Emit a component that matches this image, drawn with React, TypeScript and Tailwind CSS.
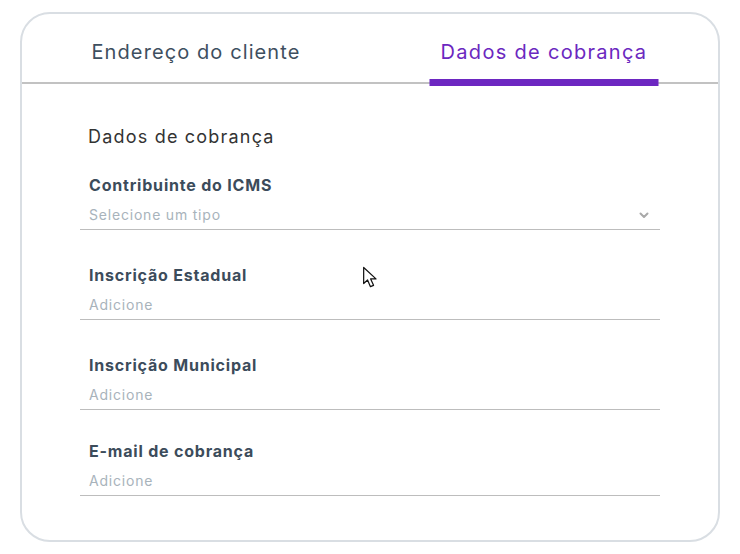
const fields = [
  { label: "Contribuinte do ICMS", placeholder: "Selecione um tipo", select: true, gap: "mt-[23px]" },
  { label: "Inscrição Estadual", placeholder: "Adicione", select: false, gap: "mt-[33px]" },
  { label: "Inscrição Municipal", placeholder: "Adicione", select: false, gap: "mt-[33px]" },
  { label: "E-mail de cobrança", placeholder: "Adicione", select: false, gap: "mt-[29px]" },
];

function Chevron() {
  return (
    <svg width="10" height="7" viewBox="0 0 10 7" fill="none">
      <path d="M1.5 1.5 L5 5 L8.5 1.5" stroke="#a9a9a9" strokeWidth="2" strokeLinecap="round" strokeLinejoin="round" />
    </svg>
  );
}

function Cursor() {
  return (
    <svg width="20" height="26" viewBox="0 0 18 22" className="absolute left-[362px] top-[265px]">
      <path
        d="M1.5 1.5 L1.5 16 L5 12.8 L7.6 18.8 L10.4 17.6 L7.8 11.8 L12.6 11.8 Z"
        fill="#ffffff"
        stroke="#111111"
        strokeWidth="1.1"
        strokeLinejoin="round"
      />
    </svg>
  );
}

export default function App() {
  return (
    <div
      className="relative h-[554px] w-[740px] bg-white pl-[20px] pt-[12px]"
      style={{ fontFamily: "Inter, 'Noto Sans', sans-serif" }}
    >
      <div className="h-[530px] w-[700px] rounded-[30px] border-2 border-[#d9dee3] bg-white">
        {/* Tabs */}
        <div className="relative flex border-b-2 border-[#c2c2c2]">
          <div className="flex flex-1 justify-center pt-[24px] pb-[16px]">
            <span className="text-[20px] leading-[28px] tracking-[1.1px] text-[#3e4f60]">
              Endereço do cliente
            </span>
          </div>
          <div className="relative flex flex-1 justify-center pt-[24px] pb-[16px]">
            <span className="text-[20px] leading-[28px] tracking-[1.3px] text-[#6b28c0]">
              Dados de cobrança
            </span>
            <div className="absolute bottom-[-4px] left-1/2 h-[7px] w-[229px] -translate-x-1/2 bg-[#6d27c1]" />
          </div>
        </div>

        {/* Content */}
        <div className="px-[58px] pt-[39px]">
          <h2 className="pl-[8px] text-[18px] leading-[27px] tracking-[1.2px] text-[#333333]">
            Dados de cobrança
          </h2>
          {fields.map((f) => (
            <div key={f.label} className={`${f.gap} border-b border-[#bdbdbd] pb-[4px]`}>
              <div className="pl-[9px] text-[16px] font-bold leading-[24px] tracking-[0.8px] text-[#3c4c5b]">
                {f.label}
              </div>
              <div className="mt-[8px] flex items-center justify-between pl-[9px] pr-[11px]">
                <span className="text-[14px] leading-[20px] tracking-[0.8px] text-[#a8b3bb]">
                  {f.placeholder}
                </span>
                {f.select && <Chevron />}
              </div>
            </div>
          ))}
        </div>
      </div>
      <Cursor />
    </div>
  );
}
